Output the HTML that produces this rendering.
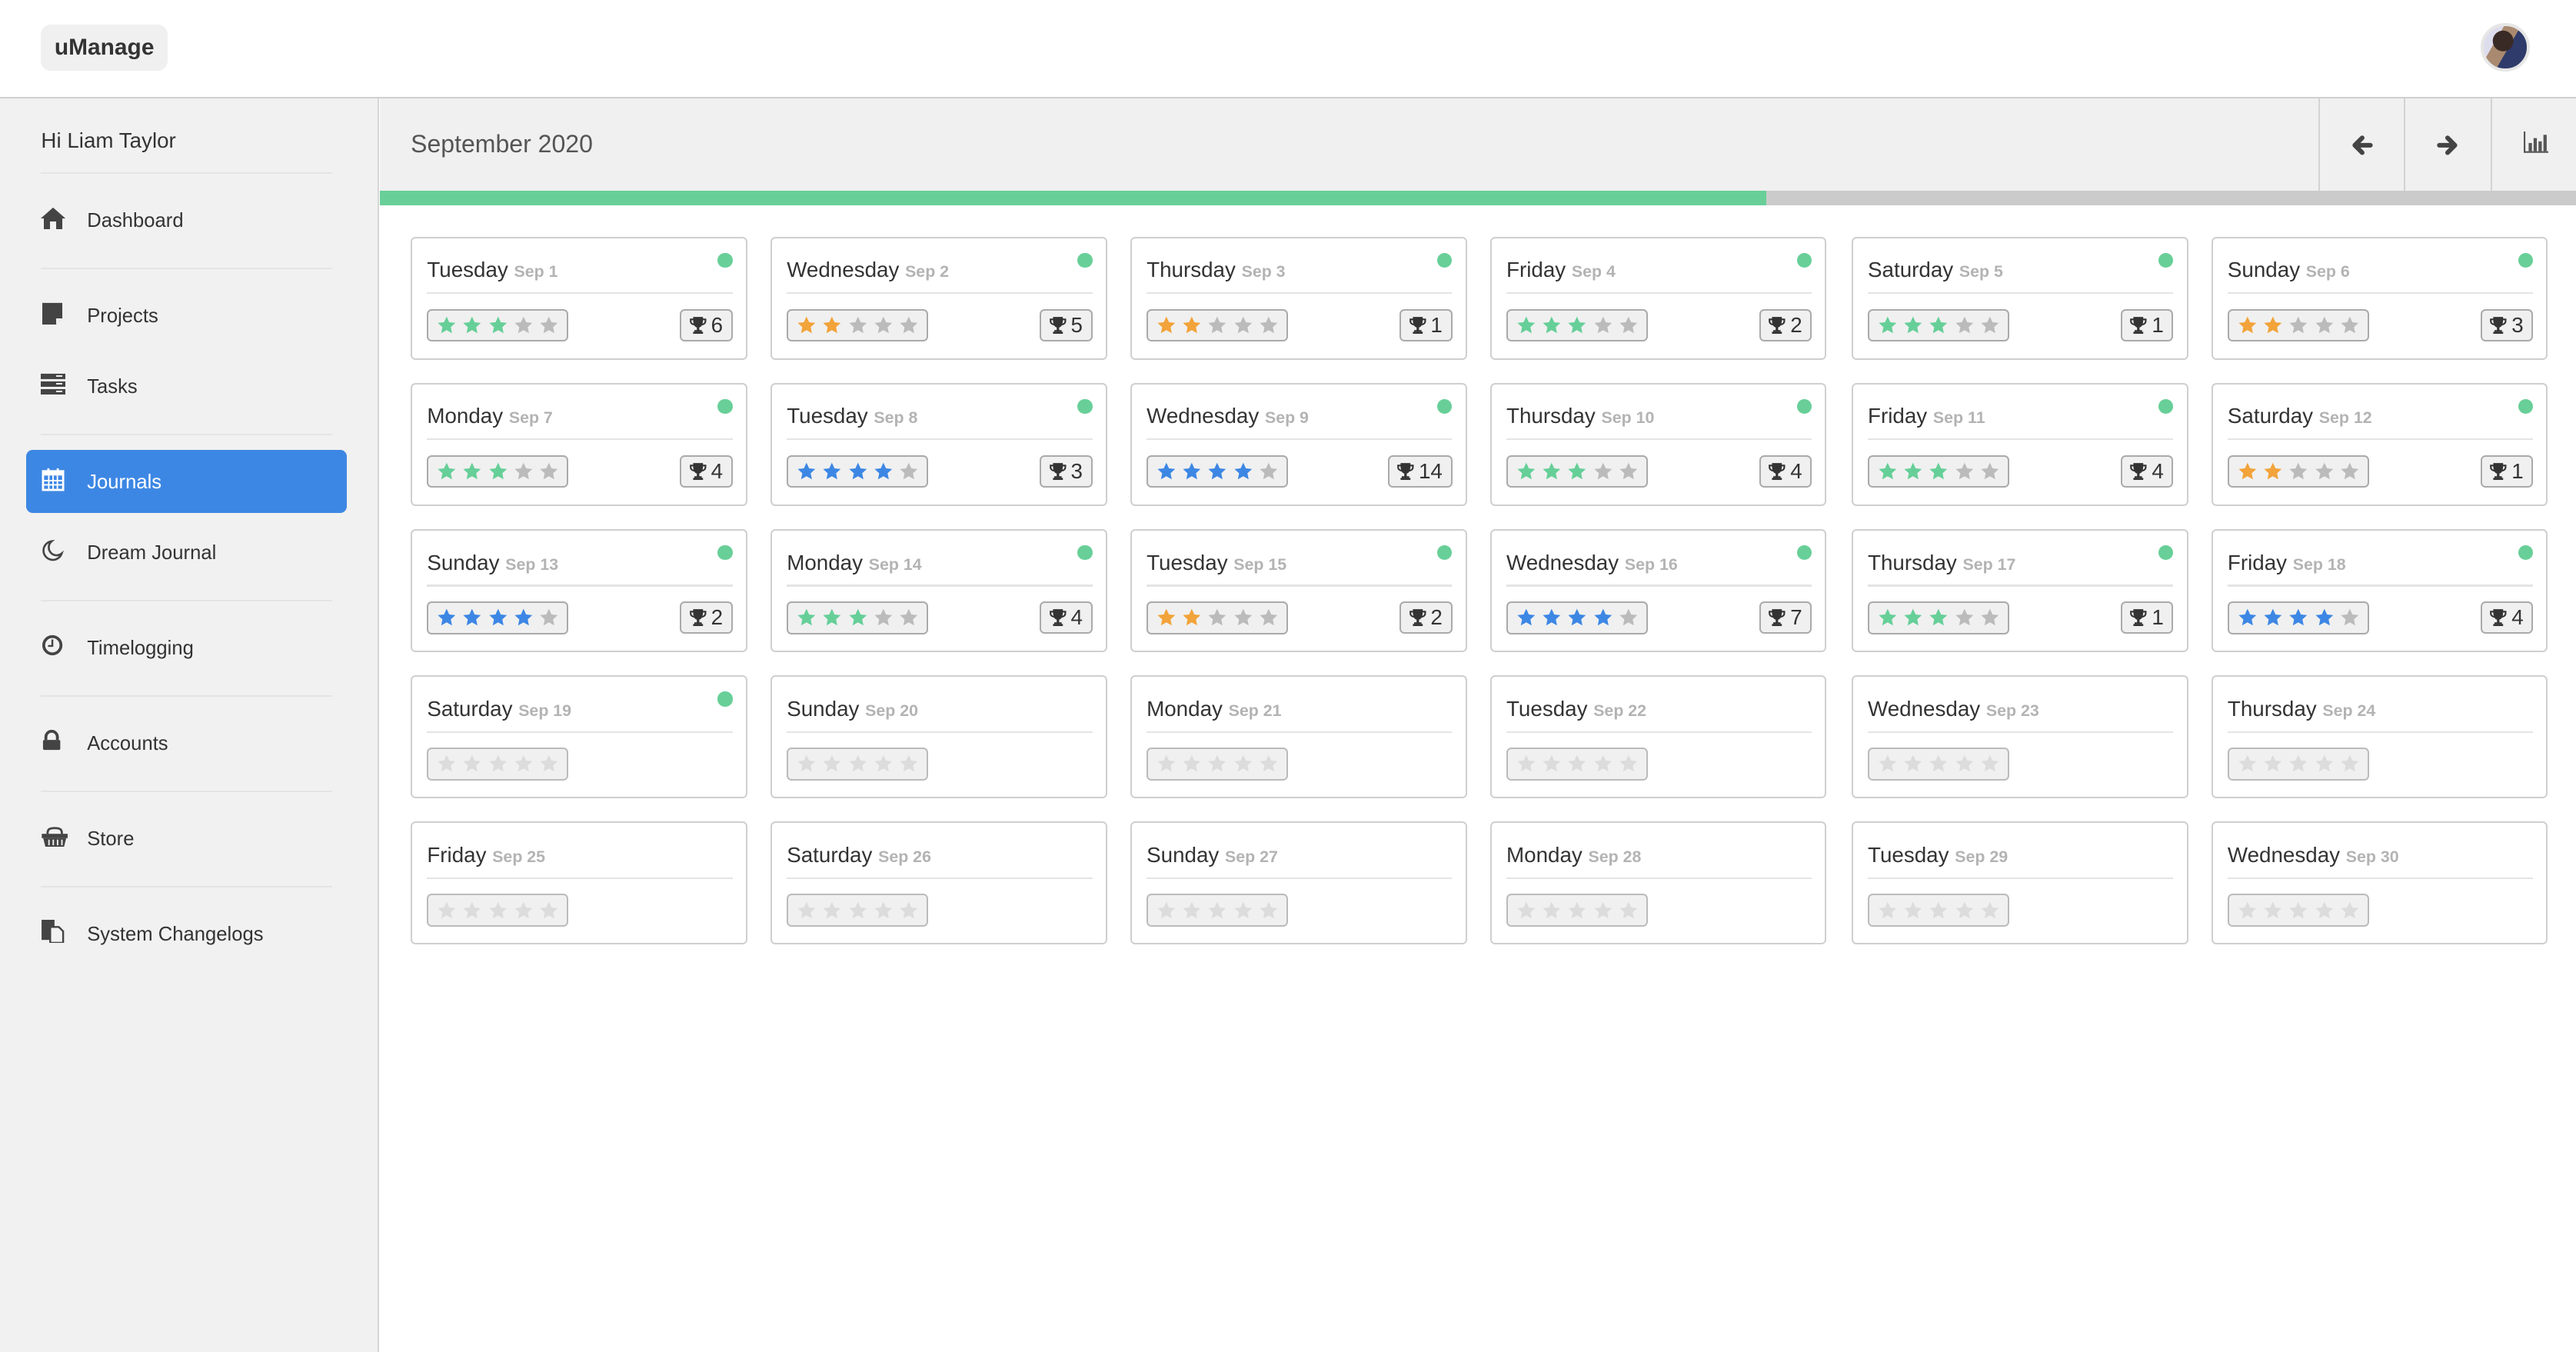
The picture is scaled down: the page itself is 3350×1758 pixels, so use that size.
<!DOCTYPE html>
<html><head><meta charset="utf-8"><style>
html,body{margin:0;padding:0;width:3350px;height:1758px;overflow:hidden;background:#fff}
#w{zoom:2.13648;width:1568px;height:823px;position:relative;font-family:"Liberation Sans",sans-serif;color:#333}
.hdr{position:absolute;left:0;top:0;width:1568px;height:60px;background:#fff;border-bottom:1px solid #cfcfcf;box-sizing:border-box}
.logo{position:absolute;left:25px;top:15px;width:77px;height:28px;background:#f0f0f0;border-radius:6px;font-weight:bold;font-size:14px;line-height:28px;text-align:center;color:#333}
.av{position:absolute;left:1510px;top:14px;width:26px;height:26px;border-radius:50%;border:2px solid #e6e6e6;background:radial-gradient(circle at 45% 35%,#3a2a25 0 28%,transparent 29%),linear-gradient(120deg,#dde 0 30%,#a98a70 30% 55%,#2f3b6a 55%)}
.sb{position:absolute;left:0;top:60px;width:230px;height:763px;background:#f1f1f1;border-right:1px solid #d6d6d6}
.sb .t{position:absolute;left:53px;font-size:12px;color:#333}
.sb .t.h{left:25px;font-size:13px}
.sep{position:absolute;left:25px;width:177px;height:1px;background:#e4e4e4}
.ic{position:absolute;left:25px;width:15px;height:14px}
.act{position:absolute;left:16px;top:214px;width:195px;height:38px;background:#3d87e4;border-radius:4px}
.mh{position:absolute;left:231px;top:60px;width:1337px;height:56px;background:#f0f0f0}
.mh .ti{position:absolute;left:19px;top:19px;font-size:15px;color:#555}
.vb{position:absolute;top:0;width:1px;height:56px;background:#d3d3d3}
.pb{position:absolute;left:231px;top:116px;width:1337px;height:9px;background:#cbcbcb}
.pb div{width:844px;height:9px;background:#68cf98}
.c{position:absolute;width:203px;height:73px;border:1px solid #cfcfcf;border-radius:3px;background:#fff}
.c .d{position:absolute;left:9px;top:12px;font-size:13px;color:#333;white-space:nowrap}
.c .d b{font-size:10px;color:#b3b3b3}
.c .dot{position:absolute;left:186px;top:9px;width:9px;height:9px;border-radius:50%;background:#68cf98}
.c .ln{position:absolute;left:9px;top:33px;width:186px;height:1px;background:#e4e4e4}
.st{position:absolute;left:9px;top:43px;width:86px;height:20px;box-sizing:border-box;background:#f0f0f0;border:1px solid #aaa;border-radius:3px;display:flex;align-items:center;padding-left:5px;gap:3.6px}
.st svg{width:12px;height:12px}
.e .st{border-color:#bbb}
.tr{position:absolute;right:8px;top:43px;height:18px;padding:0 5px 0 4px;background:#f0f0f0;border:1px solid #aaa;border-radius:3px;font-size:13px;line-height:18px;display:flex;align-items:center;gap:2px;color:#333}
.tr svg{width:12px;height:12px}
.g{fill:#66cf98}.o{fill:#f2a33a}.b{fill:#3d87e4}.x{fill:#bbb}.y{fill:#dcdcdc}
</style></head><body><div id="w">
<svg width="0" height="0" style="position:absolute"><defs>
<symbol id="s" viewBox="0 0 24 24"><path d="M12 1.5l3.2 6.9 7.5.9-5.6 5.1 1.5 7.4L12 18l-6.6 3.8 1.5-7.4-5.6-5.1 7.5-.9z"/></symbol>
<symbol id="t" viewBox="0 0 24 24"><path fill="#333" d="M6 2h12v2h4v3c0 3-2.5 5-5.3 5.2-.8 1.4-2 2.3-3.2 2.6V18h3v2H7.5v-2h3v-3.2c-1.2-.3-2.4-1.2-3.2-2.6C4.5 12 2 10 2 7V4h4zm-2 4v1c0 1.6 1.2 2.8 2.6 3.1C6.2 8.9 6 7.5 6 6zm16 0h-2c0 1.5-.2 2.9-.6 4.1 1.4-.3 2.6-1.5 2.6-3.1z"/><rect x="6" y="20" width="12" height="2.5" fill="#333"/></symbol>
</defs></svg>
<div class="hdr"><div class="logo">uManage</div><div class="av"></div></div>
<div class="sb">
<div class="t h" style="top:18px">Hi Liam Taylor</div>
<div class="sep" style="top:45px"></div>
<svg class="ic" style="top:66px" viewBox="0 0 16 14"><path fill="#444" d="M8 0l8 7h-2v7h-4V9H6v5H2V7H0z"/></svg>
<div class="t" style="top:68px">Dashboard</div>
<div class="sep" style="top:103px"></div>
<svg class="ic" style="top:124px" viewBox="0 0 16 14"><path fill="#444" d="M1 0h13v10l-4 4H1z"/><path fill="#f1f1f1" d="M10 14v-4h4z"/></svg>
<div class="t" style="top:126px">Projects</div>
<svg class="ic" style="top:167px" viewBox="0 0 16 14"><rect fill="#444" x="0" y="0" width="16" height="3.5"/><rect fill="#444" x="0" y="5" width="16" height="3.5"/><rect fill="#444" x="0" y="10" width="16" height="3.5"/><rect fill="#f1f1f1" x="10" y="1" width="4" height="1"/><rect fill="#f1f1f1" x="10" y="6" width="4" height="1"/><rect fill="#f1f1f1" x="10" y="11" width="4" height="1"/></svg>
<div class="t" style="top:169px">Tasks</div>
<div class="sep" style="top:204px"></div>
<div class="act"></div>
<svg class="ic" style="top:225px" viewBox="0 0 16 16"><rect x="1" y="2" width="14" height="13" fill="none" stroke="#fff" stroke-width="1.5"/><rect x="1" y="2" width="14" height="3" fill="#fff"/><path stroke="#fff" d="M1 8.5h14M1 11.5h14M5 5v10M8 5v10M11 5v10"/><rect x="4" y="0" width="1.5" height="3" fill="#fff"/><rect x="10.5" y="0" width="1.5" height="3" fill="#fff"/></svg>
<div class="t" style="top:227px;color:#fff">Journals</div>
<svg class="ic" style="top:268px" viewBox="0 0 16 16"><path fill="none" stroke="#444" stroke-width="1.4" d="M7 1.5a6.5 6.5 0 1 0 7 8.5A5.5 5.5 0 0 1 7 1.5z"/></svg>
<div class="t" style="top:270px">Dream Journal</div>
<div class="sep" style="top:305px"></div>
<svg class="ic" style="top:326px" viewBox="0 0 16 16"><circle cx="7.5" cy="7.5" r="6" fill="none" stroke="#444" stroke-width="2"/><path d="M7.5 3.5v4.5H4.5" fill="none" stroke="#444" stroke-width="1.3"/></svg>
<div class="t" style="top:328px">Timelogging</div>
<div class="sep" style="top:363px"></div>
<svg class="ic" style="top:384px" viewBox="0 0 16 16"><path d="M3 7V5a4 4 0 0 1 8 0v2" fill="none" stroke="#444" stroke-width="2"/><rect x="1" y="7" width="12" height="7" rx="1" fill="#444"/></svg>
<div class="t" style="top:386px">Accounts</div>
<div class="sep" style="top:421px"></div>
<svg class="ic" style="top:442px;width:17px" viewBox="0 0 18 16"><path d="M4 6c0-3 1-4 5-4s5 1 5 4" fill="none" stroke="#444" stroke-width="1.5"/><rect x="0" y="6" width="18" height="3" fill="#444"/><path d="M1 9h16l-1.5 6h-13z" fill="#444"/><path stroke="#f1f1f1" d="M5 10v4M8 10v4M11 10v4M14 10v4"/></svg>
<div class="t" style="top:444px">Store</div>
<div class="sep" style="top:479px"></div>
<svg class="ic" style="top:500px" viewBox="0 0 16 16"><rect x="0" y="0" width="9" height="14" fill="#444"/><path d="M6 5h6l3 3v8H6z" fill="#f1f1f1" stroke="#444" stroke-width="1.3"/></svg>
<div class="t" style="top:502px">System Changelogs</div>
</div>
<div class="mh"><div class="ti">September 2020</div>
<div class="vb" style="left:1180px"></div><div class="vb" style="left:1232px"></div><div class="vb" style="left:1285px"></div>
<svg style="position:absolute;left:1200px;top:22px;width:14px;height:13px" viewBox="0 0 14 13"><path d="M12 6.5H3M7 2L2.5 6.5 7 11" fill="none" stroke="#444" stroke-width="2.8" stroke-linecap="round" stroke-linejoin="round"/></svg>
<svg style="position:absolute;left:1252px;top:22px;width:14px;height:13px" viewBox="0 0 14 13"><path d="M2 6.5h9M7 2l4.5 4.5L7 11" fill="none" stroke="#444" stroke-width="2.8" stroke-linecap="round" stroke-linejoin="round"/></svg>
<svg style="position:absolute;left:1305px;top:20px;width:15px;height:13px" viewBox="0 0 15 13"><path d="M.5 0v12.5H15" fill="none" stroke="#555"/><rect x="3" y="7" width="2" height="5" fill="#555"/><rect x="6" y="4" width="2" height="8" fill="#555"/><rect x="9" y="6" width="2" height="6" fill="#555"/><rect x="12" y="2" width="2" height="10" fill="#555"/></svg>
</div>
<div class="pb"><div></div></div>

<div class="c" style="left:250px;top:144px"><div class="d">Tuesday <b>Sep 1</b></div><div class="dot"></div><div class="ln"></div><div class="st"><svg class="g"><use href="#s"/></svg><svg class="g"><use href="#s"/></svg><svg class="g"><use href="#s"/></svg><svg class="x"><use href="#s"/></svg><svg class="x"><use href="#s"/></svg></div><div class="tr"><svg><use href="#t"/></svg>6</div></div>
<div class="c" style="left:469px;top:144px"><div class="d">Wednesday <b>Sep 2</b></div><div class="dot"></div><div class="ln"></div><div class="st"><svg class="o"><use href="#s"/></svg><svg class="o"><use href="#s"/></svg><svg class="x"><use href="#s"/></svg><svg class="x"><use href="#s"/></svg><svg class="x"><use href="#s"/></svg></div><div class="tr"><svg><use href="#t"/></svg>5</div></div>
<div class="c" style="left:688px;top:144px"><div class="d">Thursday <b>Sep 3</b></div><div class="dot"></div><div class="ln"></div><div class="st"><svg class="o"><use href="#s"/></svg><svg class="o"><use href="#s"/></svg><svg class="x"><use href="#s"/></svg><svg class="x"><use href="#s"/></svg><svg class="x"><use href="#s"/></svg></div><div class="tr"><svg><use href="#t"/></svg>1</div></div>
<div class="c" style="left:907px;top:144px"><div class="d">Friday <b>Sep 4</b></div><div class="dot"></div><div class="ln"></div><div class="st"><svg class="g"><use href="#s"/></svg><svg class="g"><use href="#s"/></svg><svg class="g"><use href="#s"/></svg><svg class="x"><use href="#s"/></svg><svg class="x"><use href="#s"/></svg></div><div class="tr"><svg><use href="#t"/></svg>2</div></div>
<div class="c" style="left:1127px;top:144px"><div class="d">Saturday <b>Sep 5</b></div><div class="dot"></div><div class="ln"></div><div class="st"><svg class="g"><use href="#s"/></svg><svg class="g"><use href="#s"/></svg><svg class="g"><use href="#s"/></svg><svg class="x"><use href="#s"/></svg><svg class="x"><use href="#s"/></svg></div><div class="tr"><svg><use href="#t"/></svg>1</div></div>
<div class="c" style="left:1346px;top:144px"><div class="d">Sunday <b>Sep 6</b></div><div class="dot"></div><div class="ln"></div><div class="st"><svg class="o"><use href="#s"/></svg><svg class="o"><use href="#s"/></svg><svg class="x"><use href="#s"/></svg><svg class="x"><use href="#s"/></svg><svg class="x"><use href="#s"/></svg></div><div class="tr"><svg><use href="#t"/></svg>3</div></div>
<div class="c" style="left:250px;top:233px"><div class="d">Monday <b>Sep 7</b></div><div class="dot"></div><div class="ln"></div><div class="st"><svg class="g"><use href="#s"/></svg><svg class="g"><use href="#s"/></svg><svg class="g"><use href="#s"/></svg><svg class="x"><use href="#s"/></svg><svg class="x"><use href="#s"/></svg></div><div class="tr"><svg><use href="#t"/></svg>4</div></div>
<div class="c" style="left:469px;top:233px"><div class="d">Tuesday <b>Sep 8</b></div><div class="dot"></div><div class="ln"></div><div class="st"><svg class="b"><use href="#s"/></svg><svg class="b"><use href="#s"/></svg><svg class="b"><use href="#s"/></svg><svg class="b"><use href="#s"/></svg><svg class="x"><use href="#s"/></svg></div><div class="tr"><svg><use href="#t"/></svg>3</div></div>
<div class="c" style="left:688px;top:233px"><div class="d">Wednesday <b>Sep 9</b></div><div class="dot"></div><div class="ln"></div><div class="st"><svg class="b"><use href="#s"/></svg><svg class="b"><use href="#s"/></svg><svg class="b"><use href="#s"/></svg><svg class="b"><use href="#s"/></svg><svg class="x"><use href="#s"/></svg></div><div class="tr"><svg><use href="#t"/></svg>14</div></div>
<div class="c" style="left:907px;top:233px"><div class="d">Thursday <b>Sep 10</b></div><div class="dot"></div><div class="ln"></div><div class="st"><svg class="g"><use href="#s"/></svg><svg class="g"><use href="#s"/></svg><svg class="g"><use href="#s"/></svg><svg class="x"><use href="#s"/></svg><svg class="x"><use href="#s"/></svg></div><div class="tr"><svg><use href="#t"/></svg>4</div></div>
<div class="c" style="left:1127px;top:233px"><div class="d">Friday <b>Sep 11</b></div><div class="dot"></div><div class="ln"></div><div class="st"><svg class="g"><use href="#s"/></svg><svg class="g"><use href="#s"/></svg><svg class="g"><use href="#s"/></svg><svg class="x"><use href="#s"/></svg><svg class="x"><use href="#s"/></svg></div><div class="tr"><svg><use href="#t"/></svg>4</div></div>
<div class="c" style="left:1346px;top:233px"><div class="d">Saturday <b>Sep 12</b></div><div class="dot"></div><div class="ln"></div><div class="st"><svg class="o"><use href="#s"/></svg><svg class="o"><use href="#s"/></svg><svg class="x"><use href="#s"/></svg><svg class="x"><use href="#s"/></svg><svg class="x"><use href="#s"/></svg></div><div class="tr"><svg><use href="#t"/></svg>1</div></div>
<div class="c" style="left:250px;top:322px"><div class="d">Sunday <b>Sep 13</b></div><div class="dot"></div><div class="ln"></div><div class="st"><svg class="b"><use href="#s"/></svg><svg class="b"><use href="#s"/></svg><svg class="b"><use href="#s"/></svg><svg class="b"><use href="#s"/></svg><svg class="x"><use href="#s"/></svg></div><div class="tr"><svg><use href="#t"/></svg>2</div></div>
<div class="c" style="left:469px;top:322px"><div class="d">Monday <b>Sep 14</b></div><div class="dot"></div><div class="ln"></div><div class="st"><svg class="g"><use href="#s"/></svg><svg class="g"><use href="#s"/></svg><svg class="g"><use href="#s"/></svg><svg class="x"><use href="#s"/></svg><svg class="x"><use href="#s"/></svg></div><div class="tr"><svg><use href="#t"/></svg>4</div></div>
<div class="c" style="left:688px;top:322px"><div class="d">Tuesday <b>Sep 15</b></div><div class="dot"></div><div class="ln"></div><div class="st"><svg class="o"><use href="#s"/></svg><svg class="o"><use href="#s"/></svg><svg class="x"><use href="#s"/></svg><svg class="x"><use href="#s"/></svg><svg class="x"><use href="#s"/></svg></div><div class="tr"><svg><use href="#t"/></svg>2</div></div>
<div class="c" style="left:907px;top:322px"><div class="d">Wednesday <b>Sep 16</b></div><div class="dot"></div><div class="ln"></div><div class="st"><svg class="b"><use href="#s"/></svg><svg class="b"><use href="#s"/></svg><svg class="b"><use href="#s"/></svg><svg class="b"><use href="#s"/></svg><svg class="x"><use href="#s"/></svg></div><div class="tr"><svg><use href="#t"/></svg>7</div></div>
<div class="c" style="left:1127px;top:322px"><div class="d">Thursday <b>Sep 17</b></div><div class="dot"></div><div class="ln"></div><div class="st"><svg class="g"><use href="#s"/></svg><svg class="g"><use href="#s"/></svg><svg class="g"><use href="#s"/></svg><svg class="x"><use href="#s"/></svg><svg class="x"><use href="#s"/></svg></div><div class="tr"><svg><use href="#t"/></svg>1</div></div>
<div class="c" style="left:1346px;top:322px"><div class="d">Friday <b>Sep 18</b></div><div class="dot"></div><div class="ln"></div><div class="st"><svg class="b"><use href="#s"/></svg><svg class="b"><use href="#s"/></svg><svg class="b"><use href="#s"/></svg><svg class="b"><use href="#s"/></svg><svg class="x"><use href="#s"/></svg></div><div class="tr"><svg><use href="#t"/></svg>4</div></div>
<div class="c e" style="left:250px;top:411px"><div class="d">Saturday <b>Sep 19</b></div><div class="dot"></div><div class="ln"></div><div class="st"><svg class="y"><use href="#s"/></svg><svg class="y"><use href="#s"/></svg><svg class="y"><use href="#s"/></svg><svg class="y"><use href="#s"/></svg><svg class="y"><use href="#s"/></svg></div></div>
<div class="c e" style="left:469px;top:411px"><div class="d">Sunday <b>Sep 20</b></div><div class="ln"></div><div class="st"><svg class="y"><use href="#s"/></svg><svg class="y"><use href="#s"/></svg><svg class="y"><use href="#s"/></svg><svg class="y"><use href="#s"/></svg><svg class="y"><use href="#s"/></svg></div></div>
<div class="c e" style="left:688px;top:411px"><div class="d">Monday <b>Sep 21</b></div><div class="ln"></div><div class="st"><svg class="y"><use href="#s"/></svg><svg class="y"><use href="#s"/></svg><svg class="y"><use href="#s"/></svg><svg class="y"><use href="#s"/></svg><svg class="y"><use href="#s"/></svg></div></div>
<div class="c e" style="left:907px;top:411px"><div class="d">Tuesday <b>Sep 22</b></div><div class="ln"></div><div class="st"><svg class="y"><use href="#s"/></svg><svg class="y"><use href="#s"/></svg><svg class="y"><use href="#s"/></svg><svg class="y"><use href="#s"/></svg><svg class="y"><use href="#s"/></svg></div></div>
<div class="c e" style="left:1127px;top:411px"><div class="d">Wednesday <b>Sep 23</b></div><div class="ln"></div><div class="st"><svg class="y"><use href="#s"/></svg><svg class="y"><use href="#s"/></svg><svg class="y"><use href="#s"/></svg><svg class="y"><use href="#s"/></svg><svg class="y"><use href="#s"/></svg></div></div>
<div class="c e" style="left:1346px;top:411px"><div class="d">Thursday <b>Sep 24</b></div><div class="ln"></div><div class="st"><svg class="y"><use href="#s"/></svg><svg class="y"><use href="#s"/></svg><svg class="y"><use href="#s"/></svg><svg class="y"><use href="#s"/></svg><svg class="y"><use href="#s"/></svg></div></div>
<div class="c e" style="left:250px;top:500px"><div class="d">Friday <b>Sep 25</b></div><div class="ln"></div><div class="st"><svg class="y"><use href="#s"/></svg><svg class="y"><use href="#s"/></svg><svg class="y"><use href="#s"/></svg><svg class="y"><use href="#s"/></svg><svg class="y"><use href="#s"/></svg></div></div>
<div class="c e" style="left:469px;top:500px"><div class="d">Saturday <b>Sep 26</b></div><div class="ln"></div><div class="st"><svg class="y"><use href="#s"/></svg><svg class="y"><use href="#s"/></svg><svg class="y"><use href="#s"/></svg><svg class="y"><use href="#s"/></svg><svg class="y"><use href="#s"/></svg></div></div>
<div class="c e" style="left:688px;top:500px"><div class="d">Sunday <b>Sep 27</b></div><div class="ln"></div><div class="st"><svg class="y"><use href="#s"/></svg><svg class="y"><use href="#s"/></svg><svg class="y"><use href="#s"/></svg><svg class="y"><use href="#s"/></svg><svg class="y"><use href="#s"/></svg></div></div>
<div class="c e" style="left:907px;top:500px"><div class="d">Monday <b>Sep 28</b></div><div class="ln"></div><div class="st"><svg class="y"><use href="#s"/></svg><svg class="y"><use href="#s"/></svg><svg class="y"><use href="#s"/></svg><svg class="y"><use href="#s"/></svg><svg class="y"><use href="#s"/></svg></div></div>
<div class="c e" style="left:1127px;top:500px"><div class="d">Tuesday <b>Sep 29</b></div><div class="ln"></div><div class="st"><svg class="y"><use href="#s"/></svg><svg class="y"><use href="#s"/></svg><svg class="y"><use href="#s"/></svg><svg class="y"><use href="#s"/></svg><svg class="y"><use href="#s"/></svg></div></div>
<div class="c e" style="left:1346px;top:500px"><div class="d">Wednesday <b>Sep 30</b></div><div class="ln"></div><div class="st"><svg class="y"><use href="#s"/></svg><svg class="y"><use href="#s"/></svg><svg class="y"><use href="#s"/></svg><svg class="y"><use href="#s"/></svg><svg class="y"><use href="#s"/></svg></div></div>
</div></body></html>
